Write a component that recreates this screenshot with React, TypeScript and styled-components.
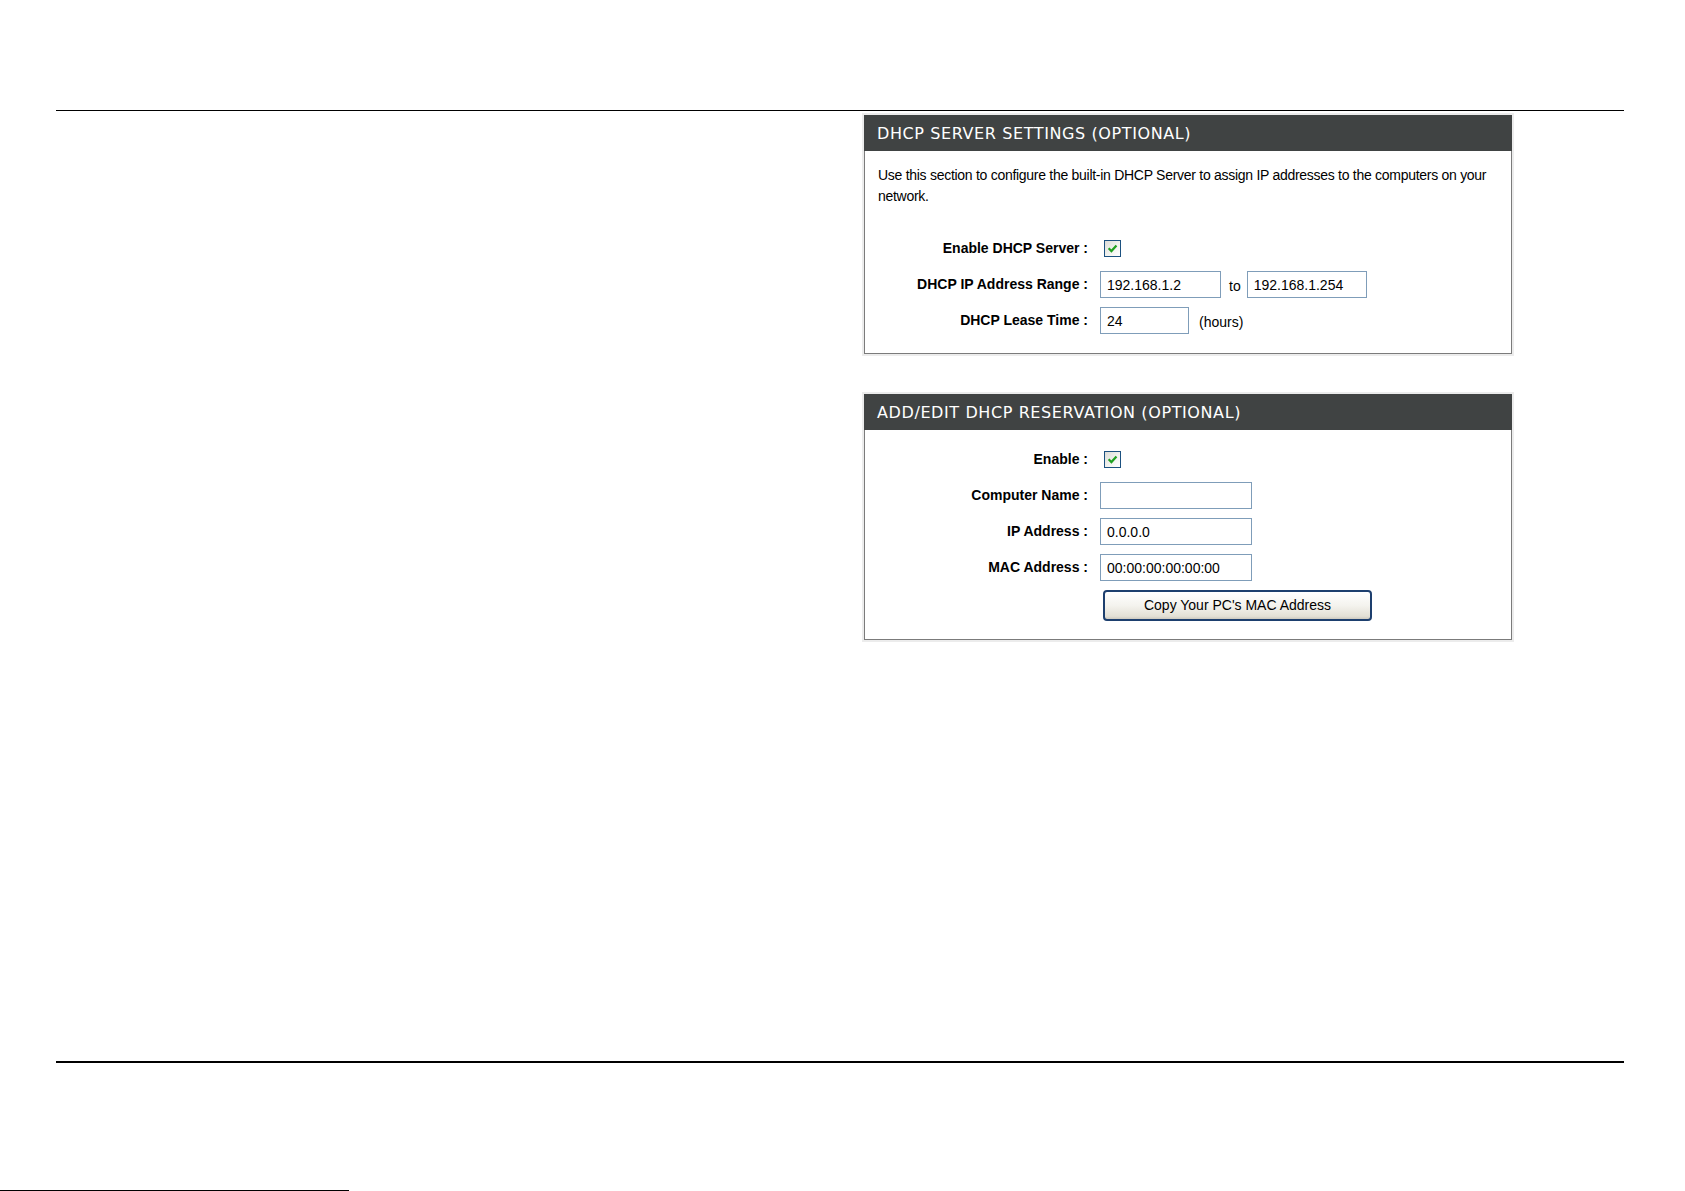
import styled, { createGlobalStyle } from "styled-components";

const GlobalStyle = createGlobalStyle`
    html, body {
        margin: 0;
        padding: 0;
        background: #ffffff;
    }
    body {
        font-family: "Liberation Sans", Arial, sans-serif;
        color: #000000;
    }
`;

const Page = styled.div`
    width: 1685px;
    height: 1191px;
    padding-top: 110px;
    box-sizing: border-box;
    display: flex;
    flex-direction: column;
    overflow: hidden;
`;

const TopRule = styled.div`
    margin: 0 61px 0 56px;
    height: 1px;
    background: #000000;
`;

const BottomRule = styled.div`
    margin: 0 61px 0 56px;
    height: 2px;
    background: #000000;
`;

const Main = styled.main`
    flex: 1;
    display: grid;
    grid-template-columns: 806px 652px;
    padding-left: 56px;
    padding-top: 2px;
    align-content: start;
`;

const Column = styled.div`
    grid-column: 2;
    display: flex;
    flex-direction: column;
    gap: 36px;
`;

const Footer = styled.div`
    height: 128px;
    display: flex;
    align-items: flex-end;
`;

const CutLine = styled.div`
    width: 349px;
    height: 1px;
    background: #000000;
`;

const Frame = styled.section`
    background: #ececec;
    padding: 2px;
`;

const Box = styled.div`
    background: #ffffff;
    border: 1px solid #7b7b7b;
    border-top: none;
`;

const Header = styled.h2`
    margin: 0 -1px;
    height: 36px;
    line-height: 37px;
    background: #404343;
    color: #ffffff;
    font-family: "DejaVu Sans", Verdana, sans-serif;
    font-weight: normal;
    font-size: 16px;
    letter-spacing: 0.6px;
    padding-left: 13px;
`;

const Body = styled.div<{ $top: number; $bottom: number }>`
    padding: ${(p) => p.$top}px 0 ${(p) => p.$bottom}px 0;
`;

const Description = styled.p`
    margin: 0 0 23px 13px;
    font-size: 14px;
    letter-spacing: -0.28px;
    line-height: 21px;
    white-space: nowrap;
`;

const Form = styled.div`
    display: grid;
    grid-template-columns: 223px auto;
    column-gap: 12px;
    grid-auto-rows: 36px;
    align-items: center;
`;

const Label = styled.div`
    text-align: right;
    font-weight: bold;
    font-size: 14px;
    white-space: nowrap;
`;

const Controls = styled.div`
    display: flex;
    align-items: center;
    font-size: 14px;
`;

const TextInput = styled.input<{ $w: number }>`
    width: ${(p) => p.$w}px;
    height: 27px;
    box-sizing: border-box;
    border: 1px solid #7f9db9;
    padding: 1px 6px 0 6px;
    font-family: "Liberation Sans", Arial, sans-serif;
    font-size: 14px;
    color: #000000;
    background: #ffffff;
    outline: none;
`;

const Between = styled.span`
    margin: 3px 6px 0 8px;
`;

const Unit = styled.span`
    margin: 3px 0 0 10px;
`;

const Check = styled.span`
    width: 17px;
    height: 17px;
    margin-left: 4px;
    box-sizing: border-box;
    border: 1px solid #1c5180;
    background: linear-gradient(135deg, #dcdcd7 0%, #f4f4f1 60%, #ffffff 100%);
    display: flex;
    align-items: center;
    justify-content: center;
`;

const Button = styled.button`
    margin: 4px 0 0 3px;
    width: 269px;
    height: 31px;
    border: 2px solid #1d3f6e;
    border-radius: 4px;
    background: linear-gradient(#ffffff 0%, #f4f3ee 50%, #e3e0d5 90%, #cdcac0 100%);
    font-family: "Liberation Sans", Arial, sans-serif;
    font-size: 14px;
    color: #000000;
    padding: 0;
`;

function CheckBox() {
    return (
        <Check>
            <svg width="11" height="11" viewBox="0 0 10 10">
                <path
                    d="M1.5 4.8 L4 7.3 L8.6 2.2"
                    fill="none"
                    stroke="#21a121"
                    strokeWidth="2"
                />
            </svg>
        </Check>
    );
}

function App() {
    return (
        <Page>
            <GlobalStyle />
            <TopRule />
            <Main>
                <Column>
                    <Frame>
                        <Box>
                            <Header>DHCP SERVER SETTINGS (OPTIONAL)</Header>
                            <Body $top={14} $bottom={15}>
                                <Description>
                                    Use this section to configure the built-in DHCP Server to
                                    assign IP addresses to the computers on your
                                    <br />
                                    network.
                                </Description>
                                <Form>
                                    <Label>Enable DHCP Server :</Label>
                                    <Controls>
                                        <CheckBox />
                                    </Controls>
                                    <Label>DHCP IP Address Range :</Label>
                                    <Controls>
                                        <TextInput $w={121} readOnly defaultValue="192.168.1.2" />
                                        <Between>to</Between>
                                        <TextInput $w={120} readOnly defaultValue="192.168.1.254" />
                                    </Controls>
                                    <Label>DHCP Lease Time :</Label>
                                    <Controls>
                                        <TextInput $w={89} readOnly defaultValue="24" />
                                        <Unit>(hours)</Unit>
                                    </Controls>
                                </Form>
                            </Body>
                        </Box>
                    </Frame>
                    <Frame>
                        <Box>
                            <Header>ADD/EDIT DHCP RESERVATION (OPTIONAL)</Header>
                            <Body $top={11} $bottom={18}>
                                <Form>
                                    <Label>Enable :</Label>
                                    <Controls>
                                        <CheckBox />
                                    </Controls>
                                    <Label>Computer Name :</Label>
                                    <Controls>
                                        <TextInput $w={152} readOnly defaultValue="" />
                                    </Controls>
                                    <Label>IP Address :</Label>
                                    <Controls>
                                        <TextInput $w={152} readOnly defaultValue="0.0.0.0" />
                                    </Controls>
                                    <Label>MAC Address :</Label>
                                    <Controls>
                                        <TextInput $w={152} readOnly defaultValue="00:00:00:00:00:00" />
                                    </Controls>
                                </Form>
                                <Form>
                                    <span />
                                    <Controls>
                                        <Button type="button">Copy Your PC's MAC Address</Button>
                                    </Controls>
                                </Form>
                            </Body>
                        </Box>
                    </Frame>
                </Column>
            </Main>
            <BottomRule />
            <Footer>
                <CutLine />
            </Footer>
        </Page>
    );
}

export default App;
